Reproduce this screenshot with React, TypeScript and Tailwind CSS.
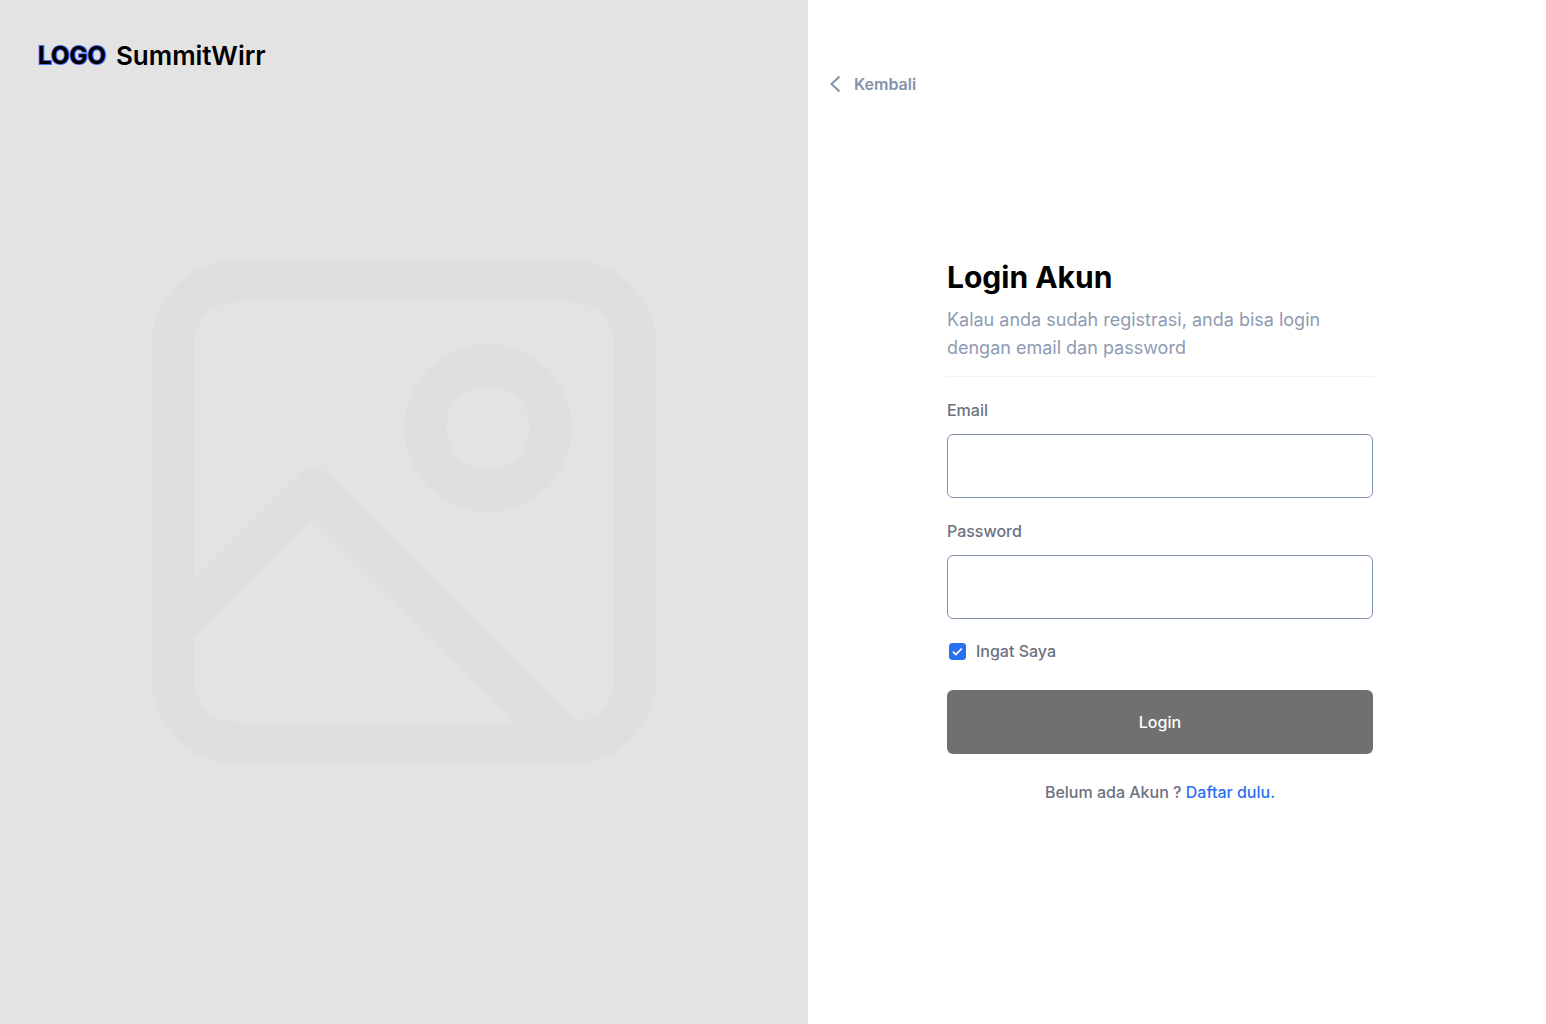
import React from "react";

function ImagePlaceholder() {
  return (
    <svg
      viewBox="0 0 504 504"
      fill="none"
      stroke="#dfdfdf"
      strokeWidth="42"
      strokeLinejoin="round"
      aria-hidden="true"
      className="w-[504px] max-w-[80%]"
    >
      <rect x="21" y="21" width="462" height="462" rx="63" />
      <circle cx="336" cy="168" r="63" />
      <path d="M21 369 162 229 415 483" />
    </svg>
  );
}

function BrandPanel() {
  return (
    <aside className="grid w-[52.26%] shrink-0 bg-[#e3e3e3]">
      <div className="col-start-1 row-start-1 flex h-fit items-center gap-[10px] pt-9 pl-[38px] leading-10 text-black">
        <span className="text-2xl leading-10 font-bold [-webkit-text-stroke:2px_#4a6cf7] [paint-order:stroke_fill]">LOGO</span>
        <span className="text-[26px] leading-10 font-semibold">SummitWirr</span>
      </div>
      <div className="col-start-1 row-start-1 flex items-center justify-center">
        <ImagePlaceholder />
      </div>
    </aside>
  );
}

function Field({ id, label, type }: { id: string; label: string; type: string }) {
  return (
    <div className="flex flex-col gap-3">
      <label htmlFor={id} className="text-base leading-6 font-medium text-[#6b7280]">
        {label}
      </label>
      <input
        id={id}
        name={id}
        type={type}
        className="h-16 w-full rounded-md border border-[#8392ab] bg-white px-4 text-base text-black outline-none focus:border-[#2970f0]"
      />
    </div>
  );
}

export default function App() {
  return (
    <div className="flex min-h-screen bg-white font-['Inter',sans-serif]">
      <BrandPanel />
      <main className="flex min-w-0 flex-1 flex-col pt-[72px]">
        <a href="#" className="ml-5 flex w-fit items-center gap-3 text-base leading-6 font-semibold text-[#8392ab]">
          <svg width="14" height="18" viewBox="0 0 14 18" fill="none" stroke="currentColor" strokeWidth="2" aria-hidden="true">
            <path d="M11.5 1.5 3.5 9l8 7.5" />
          </svg>
          Kembali
        </a>

        <form className="mt-[161px] ml-[139px] w-[426px] max-w-full" onSubmit={(e) => e.preventDefault()}>
          <h1 className="text-[30px] leading-10 font-bold text-black">Login Akun</h1>
          <p className="mt-[9px] border-b border-[#f3f4f6] pb-[14px] text-lg leading-7 text-[#8e9bb2]">
            Kalau anda sudah registrasi, anda bisa login dengan email dan password
          </p>

          <div className="mt-[21px] flex flex-col gap-[21px]">
            <Field id="email" label="Email" type="email" />
            <Field id="password" label="Password" type="password" />
          </div>

          <div className="mt-5 flex items-center gap-[10px] pl-0.5">
            <span className="grid size-[17px] place-items-center">
              <input
                id="remember"
                type="checkbox"
                defaultChecked
                className="peer col-start-1 row-start-1 size-[17px] appearance-none rounded-[3px] border border-[#8392ab] checked:border-[#2970f0] checked:bg-[#2970f0]"
              />
              <svg
                viewBox="0 0 18 18"
                fill="none"
                stroke="white"
                strokeWidth="1.8"
                aria-hidden="true"
                className="pointer-events-none invisible col-start-1 row-start-1 size-[17px] peer-checked:visible"
              >
                <path d="m4.2 9.2 3 3 6.3-6.4" />
              </svg>
            </span>
            <label htmlFor="remember" className="text-base leading-6 font-medium text-[#6b7280]">
              Ingat Saya
            </label>
          </div>

          <button type="submit" className="mt-[27px] h-16 w-full rounded-md bg-[#707070] text-base font-medium text-white">
            Login
          </button>

          <p className="mt-[26px] text-center text-base leading-6 font-medium text-[#6b7280]">
            Belum ada Akun ?{" "}
            <a href="#" className="text-[#2970f0]">
              Daftar dulu.
            </a>
          </p>
        </form>
      </main>
    </div>
  );
}
